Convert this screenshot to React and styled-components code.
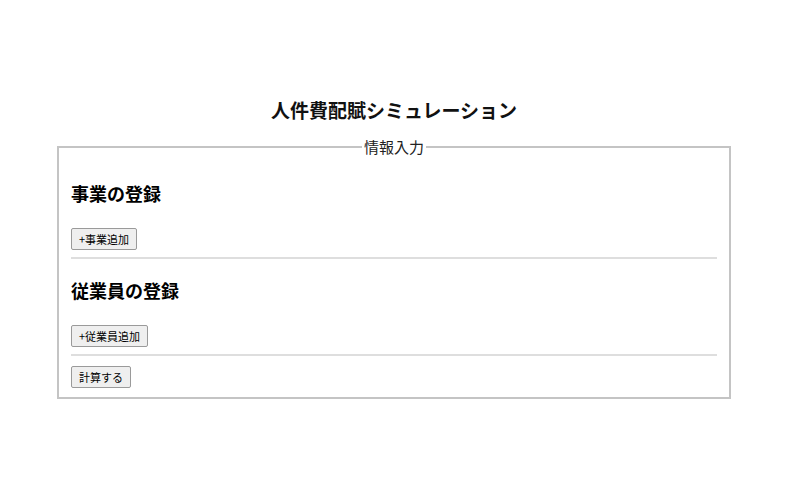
import React from "react"
import styled, { createGlobalStyle } from "styled-components"

/* global reset */
const GlobalStyle = createGlobalStyle`
  body {
    margin: 0;
    background: #fff;
    font-family: "Noto Sans CJK JP", "Noto Sans", sans-serif;
    color: #000;
  }
`

const Page = styled.div`
  padding: 96px 20px 40px 8px;
`

const Title = styled.h1`
  margin: 0 0 13px;
  font-size: 19px;
  font-weight: bold;
  text-align: center;
  color: #111;
`

const Panel = styled.fieldset`
  width: 674px;
  box-sizing: border-box;
  margin: 0 auto;
  padding: 5px 12px 9px;
  border: 2px solid #c4c4c4;
`

const Legend = styled.legend`
  margin: 0 auto;
  padding: 0 2px;
  font-size: 15px;
  color: #222;
`

const Heading = styled.h3`
  margin: 18px 0 22px;
  font-size: 18px;
  font-weight: bold;
`

const ButtonRow = styled.div`
  display: flex;
`

const Button = styled.button`
  margin: 0;
  padding: 2px 7px;
  font-family: "Noto Sans CJK JP", "Noto Sans", sans-serif;
  font-size: 11px;
  line-height: 16px;
  color: #000;
  background: #efefef;
  border: 1px solid #9a9a9a;
  border-radius: 2px;
`

const Divider = styled.hr`
  margin: 7px 0 10px;
  border: 0;
  border-top: 2px solid #dedede;
`

const sections = [
  { title: "事業の登録", action: "+事業追加" },
  { title: "従業員の登録", action: "+従業員追加" },
]

const App = () => {
  return (
    <>
      <GlobalStyle />
      <Page>
        <Title>人件費配賦シミュレーション</Title>
        <Panel>
          <Legend>情報入力</Legend>
          {sections.map((s) => (
            <React.Fragment key={s.title}>
              <Heading>{s.title}</Heading>
              <ButtonRow>
                <Button>{s.action}</Button>
              </ButtonRow>
              <Divider />
            </React.Fragment>
          ))}
          <ButtonRow>
            <Button>計算する</Button>
          </ButtonRow>
        </Panel>
      </Page>
    </>
  )
}

export default App
